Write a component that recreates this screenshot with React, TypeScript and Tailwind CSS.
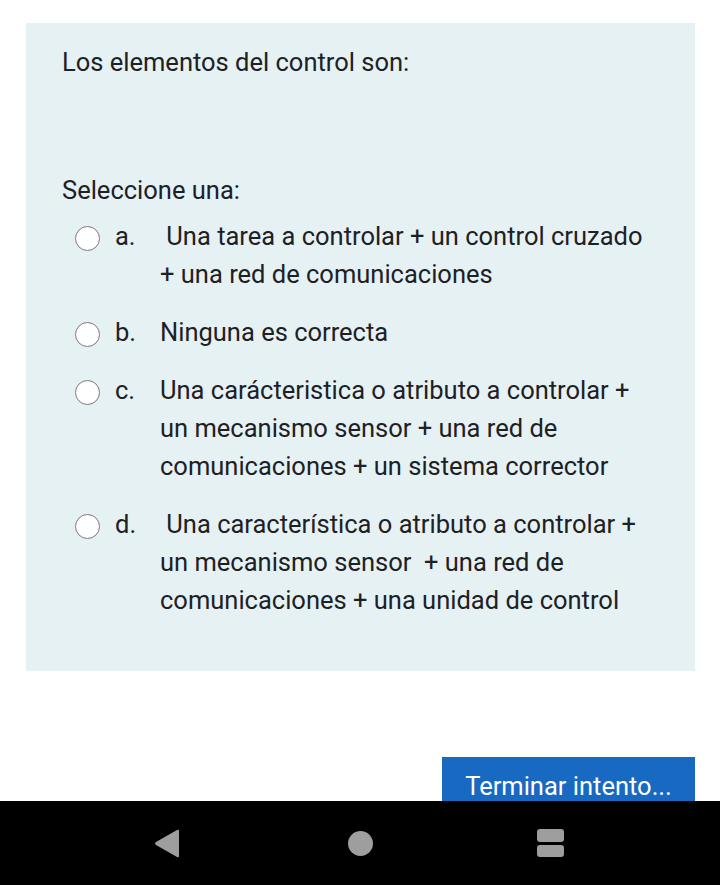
export default function App() {
  const options = [
    { key: "a.", lines: ["\u00a0Una tarea a controlar + un control cruzado", "+ una red de comunicaciones"] },
    { key: "b.", lines: ["Ninguna es correcta"] },
    {
      key: "c.",
      lines: [
        "Una carácteristica o atributo a controlar +",
        "un mecanismo sensor + una red de",
        "comunicaciones + un sistema corrector",
      ],
    },
    {
      key: "d.",
      lines: [
        "\u00a0Una característica o atributo a controlar +",
        "un mecanismo sensor\u00a0 + una red de",
        "comunicaciones + una unidad de control",
      ],
    },
  ];

  return (
    <div
      className="relative w-[720px] h-[885px] bg-white overflow-hidden text-[#1d2125]"
      style={{ fontFamily: "Roboto, 'Noto Sans', sans-serif" }}
    >
      <div className="pt-[23px] pl-[26px] pr-[25px]">
        <div className="bg-[#e6f1f4] pl-[36px] pr-[20px] pt-[20px] pb-[52px] text-[25.5px] leading-[38px]">
          <p>Los elementos del control son:</p>
          <p className="mt-[90px]">Seleccione una:</p>
          <div className="mt-[8px] pl-[13px] flex flex-col gap-[20px]">
            {options.map((o) => (
              <div key={o.key} className="flex">
                <div className="w-[26px] shrink-0 pt-[9px]">
                  <div className="w-[25px] h-[25px] rounded-full border-[1.5px] border-[#7a7a7a] bg-white" />
                </div>
                <div className="w-[14px] shrink-0" />
                <div className="w-[45px] shrink-0">{o.key}</div>
                <div className="whitespace-pre">
                  {o.lines.map((l, i) => (
                    <div key={i}>{l}</div>
                  ))}
                </div>
              </div>
            ))}
          </div>
        </div>
        <div className="flex justify-end mt-[86px]">
          <div className="w-[253px] h-[56px] bg-[#1769c2] text-white text-[25.5px] flex justify-center pt-[15px] leading-[28px]">
            Terminar intento...
          </div>
        </div>
      </div>

      <div className="absolute left-0 right-0 bottom-0 h-[84px] bg-black">
        <svg width="720" height="84" viewBox="0 0 720 84">
          <path d="M179 30 L179 55 Q179 57 177 56 L156 44 Q154 42.5 156 41 L177 29 Q179 28 179 30 Z" fill="#9e9e9e" />
          <circle cx="360.5" cy="42.5" r="12.5" fill="#9e9e9e" />
          <rect x="537" y="28" width="27" height="13" rx="3" fill="#9e9e9e" />
          <rect x="537" y="44" width="27" height="12" rx="3" fill="#9e9e9e" />
        </svg>
      </div>
    </div>
  );
}
